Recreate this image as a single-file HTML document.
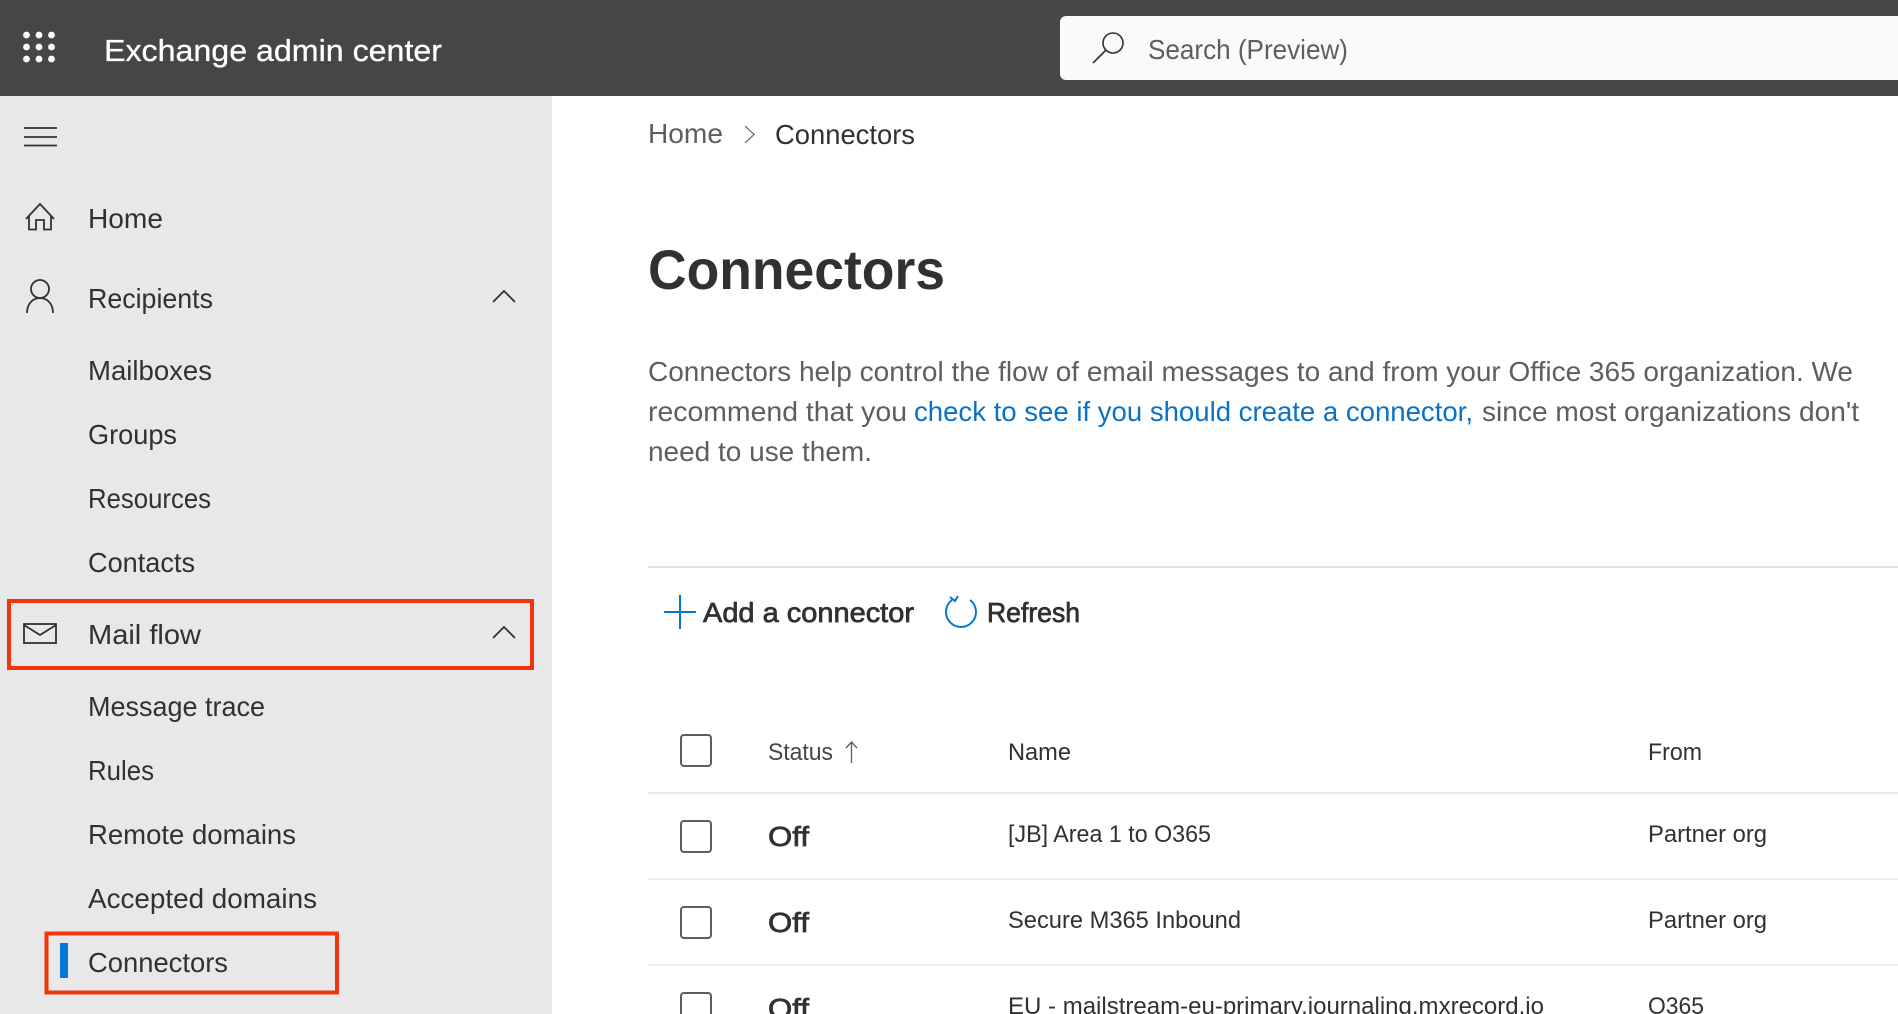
<!DOCTYPE html>
<html lang="en"><head><meta charset="utf-8"><title>Exchange admin center</title>
<style>
html,body{margin:0;padding:0;background:#fff;overflow:hidden;width:1898px;height:1014px}
svg{display:block}
text{font-family:"Liberation Sans",sans-serif;fill:#323130}
.n{font-size:28px}
.p{font-size:27.5px;fill:#605e5c}
.t{font-size:24px}
.b{font-weight:700}
.s{stroke:#323130;stroke-width:.75px}
.i{fill:none;stroke:#323130;stroke-width:1.8}
.c{fill:#fff;stroke:#605e5c;stroke-width:2}
</style></head><body>
<svg width="1898" height="1014" viewBox="0 0 1898 1014" xmlns="http://www.w3.org/2000/svg">
<rect width="1898" height="1014" fill="#fff"/>
<rect width="1898" height="96" fill="#484644"/>
<rect y="96" width="552" height="918" fill="#e8e8e8"/>
<g fill="#fff"><circle cx="26.500" cy="35" r="3.400"/><circle cx="39" cy="35" r="3.400"/><circle cx="51.500" cy="35" r="3.400"/><circle cx="26.500" cy="47" r="3.400"/><circle cx="39" cy="47" r="3.400"/><circle cx="51.500" cy="47" r="3.400"/><circle cx="26.500" cy="59" r="3.400"/><circle cx="39" cy="59" r="3.400"/><circle cx="51.500" cy="59" r="3.400"/></g>
<text x="104" y="61" font-size="31" style="fill:#fff;stroke:#fff;stroke-width:.3px" textLength="338" lengthAdjust="spacingAndGlyphs">Exchange admin center</text>
<rect x="1060" y="16" width="860" height="64" rx="6" fill="#fafafa"/>
<circle cx="1113" cy="43" r="10" fill="none" stroke="#323130" stroke-width="1.600"/>
<path d="M1106 50L1093 63" fill="none" stroke="#323130" stroke-width="1.600"/>
<text x="1148" y="59" font-size="28" style="fill:#605e5c" textLength="200" lengthAdjust="spacingAndGlyphs">Search (Preview)</text>

<path class="i" d="M24 128H57M24 137H57M24 145.500H57"/>
<path class="i" d="M26 219L40 204L54 219M29 216V229.500H36V220H44V229.500H51V216"/>
<text class="n" x="88" y="228" textLength="75" lengthAdjust="spacingAndGlyphs">Home</text>
<circle class="i" cx="40" cy="289" r="9"/>
<path class="i" d="M27 313C27 293 53 293 53 313"/>
<text class="n" x="88" y="308" textLength="125" lengthAdjust="spacingAndGlyphs">Recipients</text>
<path class="i" d="M493 302L504 291L515 302"/>
<text class="n" x="88" y="380" textLength="124" lengthAdjust="spacingAndGlyphs">Mailboxes</text>
<text class="n" x="88" y="444" textLength="89" lengthAdjust="spacingAndGlyphs">Groups</text>
<text class="n" x="88" y="508" textLength="123" lengthAdjust="spacingAndGlyphs">Resources</text>
<text class="n" x="88" y="572" textLength="107" lengthAdjust="spacingAndGlyphs">Contacts</text>
<rect x="24" y="624" width="32" height="19" class="i"/>
<path class="i" d="M24 625L40 635L56 625"/>
<text class="n" x="88" y="644" textLength="113" lengthAdjust="spacingAndGlyphs">Mail flow</text>
<path class="i" d="M493 638L504 627L515 638"/>
<text class="n" x="88" y="716" textLength="177" lengthAdjust="spacingAndGlyphs">Message trace</text>
<text class="n" x="88" y="780" textLength="66" lengthAdjust="spacingAndGlyphs">Rules</text>
<text class="n" x="88" y="844" textLength="208" lengthAdjust="spacingAndGlyphs">Remote domains</text>
<text class="n" x="88" y="908" textLength="229" lengthAdjust="spacingAndGlyphs">Accepted domains</text>
<text class="n" x="88" y="972" textLength="140" lengthAdjust="spacingAndGlyphs">Connectors</text>
<rect x="60" y="943" width="8" height="35" fill="#0078d4"/>
<rect x="9" y="601" width="523" height="67" fill="none" stroke="#f4350c" stroke-width="4"/>
<rect x="46.500" y="933.500" width="290.500" height="59" fill="none" stroke="#f4350c" stroke-width="4"/>

<text x="648" y="143" font-size="28" style="fill:#605e5c" textLength="75" lengthAdjust="spacingAndGlyphs">Home</text>
<path d="M745 126L754 134.500L745 143" fill="none" stroke="#605e5c" stroke-width="1.200"/>
<text x="775" y="144" font-size="28" textLength="140" lengthAdjust="spacingAndGlyphs">Connectors</text>
<text x="648" y="289" font-size="56" class="b" textLength="297" lengthAdjust="spacingAndGlyphs">Connectors</text>

<text class="p" x="648" y="381" textLength="1205" lengthAdjust="spacingAndGlyphs">Connectors help control the flow of email messages to and from your Office 365 organization. We</text>
<text class="p" x="648" y="421" textLength="259" lengthAdjust="spacingAndGlyphs">recommend that you</text>
<text class="p" x="914" y="421" style="fill:#0a72c4" textLength="559" lengthAdjust="spacingAndGlyphs">check to see if you should create a connector,</text>
<text class="p" x="1482" y="421" textLength="377" lengthAdjust="spacingAndGlyphs">since most organizations don't</text>
<text class="p" x="648" y="461" textLength="224" lengthAdjust="spacingAndGlyphs">need to use them.</text>
<rect x="648" y="566" width="1250" height="2" fill="#e1e1e1"/>

<path d="M664 612H696M680 595V629" fill="none" stroke="#0078d4" stroke-width="2"/>
<text x="703" y="622" font-size="28" class="s" textLength="211" lengthAdjust="spacingAndGlyphs">Add a connector</text>
<path d="M970 600A15 15 0 1 1 952 600M950 597L955 601L958 596" fill="none" stroke="#0078d4" stroke-width="2"/>
<text x="987" y="622" font-size="28" class="s" textLength="93" lengthAdjust="spacingAndGlyphs">Refresh</text>

<rect class="c" x="681" y="735" width="30" height="31" rx="3"/>
<text class="t" x="768" y="760" style="fill:#484644" textLength="65" lengthAdjust="spacingAndGlyphs">Status</text>
<path d="M851.500 763V742M846 748L851.500 742L857 748" fill="none" stroke="#605e5c" stroke-width="1.300"/>
<text class="t" x="1008" y="760" textLength="63" lengthAdjust="spacingAndGlyphs">Name</text>
<text class="t" x="1648" y="760" textLength="54" lengthAdjust="spacingAndGlyphs">From</text>
<rect x="648" y="792" width="1250" height="2" fill="#ebebeb"/>

<rect class="c" x="681" y="821" width="30" height="31" rx="3"/>
<text x="768" y="846" font-size="28" class="s" textLength="41" lengthAdjust="spacingAndGlyphs">Off</text>
<text class="t" x="1008" y="842" textLength="203" lengthAdjust="spacingAndGlyphs">[JB] Area 1 to O365</text>
<text class="t" x="1648" y="842" textLength="119" lengthAdjust="spacingAndGlyphs">Partner org</text>
<rect x="648" y="878" width="1250" height="2" fill="#f0f0f0"/>

<rect class="c" x="681" y="907" width="30" height="31" rx="3"/>
<text x="768" y="932" font-size="28" class="s" textLength="41" lengthAdjust="spacingAndGlyphs">Off</text>
<text class="t" x="1008" y="928" textLength="233" lengthAdjust="spacingAndGlyphs">Secure M365 Inbound</text>
<text class="t" x="1648" y="928" textLength="119" lengthAdjust="spacingAndGlyphs">Partner org</text>
<rect x="648" y="964" width="1250" height="2" fill="#f0f0f0"/>

<rect class="c" x="681" y="993" width="30" height="31" rx="3"/>
<text x="768" y="1018" font-size="28" class="s" textLength="41" lengthAdjust="spacingAndGlyphs">Off</text>
<text class="t" x="1008" y="1014" textLength="536" lengthAdjust="spacingAndGlyphs">EU - mailstream-eu-primary.journaling.mxrecord.io</text>
<text class="t" x="1648" y="1014" textLength="56" lengthAdjust="spacingAndGlyphs">O365</text>
</svg>
</body></html>
